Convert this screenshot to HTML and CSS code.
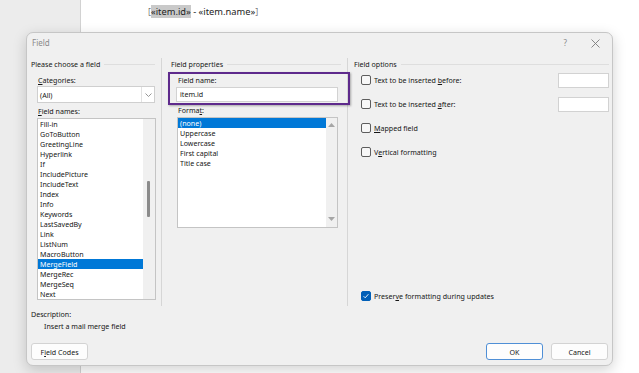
FILE: index.html
```html
<!DOCTYPE html>
<html lang="en">
<head>
    <meta charset="UTF-8">
    <title>Field</title>
    <link rel="stylesheet" href="styles.css">
</head>
<body>

<div class="word">
    <div class="gutter"></div>
    <div class="page">
        <p class="merge-line"><span class="bracket">[</span><span class="hl">«item.id»</span> - «item.name»<span class="bracket">]</span></p>
    </div>
</div>

<div class="dialog">
    <div class="titlebar">
        <span class="title">Field</span>
        <div class="title-btns">
            <span class="help">?</span>
            <svg class="close" width="9" height="9" viewBox="0 0 9 9"><path d="M0.5 0.5 L8.5 8.5 M8.5 0.5 L0.5 8.5" stroke="#7a7a7a" stroke-width="0.9" fill="none"/></svg>
        </div>
    </div>

    <div class="columns">
        <!-- Please choose a field -->
        <div class="col col-choose">
            <div class="group-head"><span>Please choose a field</span><i></i></div>
            <div class="label indent"><u>C</u>ategories:</div>
            <div class="combo">
                <span>(All)</span>
                <span class="combo-btn">
                    <svg width="7" height="4" viewBox="0 0 7 4"><path d="M0.5 0.5 L3.5 3.5 L6.5 0.5" stroke="#8a8a8a" stroke-width="0.9" fill="none"/></svg>
                </span>
            </div>
            <div class="label indent"><u>F</u>ield names:</div>
            <div class="listbox names">
                <ul id="fieldNames"></ul>
                <div class="vscroll"><div class="thumb"></div></div>
            </div>
        </div>

        <!-- Field properties -->
        <div class="col col-props">
            <div class="group-head"><span>Field properties</span><i></i></div>
            <div class="highlight">
                <div class="label">Field name:</div>
                <div class="textbox">item.id</div>
            </div>
            <div class="label format-label">Forma<u>t</u>:</div>
            <div class="listbox formats">
                <ul>
                    <li class="selected">(none)</li>
                    <li>Uppercase</li>
                    <li>Lowercase</li>
                    <li>First capital</li>
                    <li>Title case</li>
                </ul>
                <div class="vscroll arrows">
                    <svg width="7" height="4" viewBox="0 0 7 4"><path d="M0 4 L3.5 0 L7 4 Z" fill="#a6a6a6"/></svg>
                    <svg width="7" height="4" viewBox="0 0 7 4"><path d="M0 0 L3.5 4 L7 0 Z" fill="#a6a6a6"/></svg>
                </div>
            </div>
        </div>

        <!-- Field options -->
        <div class="col col-options">
            <div class="group-head"><span>Field options</span><i></i></div>
            <div class="options">
                <div class="opt-row">
                    <span class="check"></span>
                    <span class="opt-label">Text to be inserted <u>b</u>efore:</span>
                    <span class="small-box"></span>
                </div>
                <div class="opt-row">
                    <span class="check"></span>
                    <span class="opt-label">Text to be inserted <u>a</u>fter:</span>
                    <span class="small-box"></span>
                </div>
                <div class="opt-row">
                    <span class="check"></span>
                    <span class="opt-label"><u>M</u>apped field</span>
                </div>
                <div class="opt-row">
                    <span class="check"></span>
                    <span class="opt-label">V<u>e</u>rtical formatting</span>
                </div>
                <div class="opt-row preserve">
                    <span class="check checked">
                        <svg width="8" height="8" viewBox="0 0 8 8"><path d="M1.6 4.2 L3.2 5.8 L6.4 2.2" stroke="#fff" stroke-width="0.9" fill="none"/></svg>
                    </span>
                    <span class="opt-label">Preser<u>v</u>e formatting during updates</span>
                </div>
            </div>
        </div>
    </div>

    <div class="description">
        <div>Description:</div>
        <div class="desc-text">Insert a mail merge field</div>
    </div>

    <div class="footer-btns">
        <button class="btn">F<u>i</u>eld Codes</button>
        <span class="spacer"></span>
        <button class="btn btn-ok">OK</button>
        <button class="btn">Cancel</button>
    </div>
</div>

<script>
    const fieldNames = ['Fill-in', 'GoToButton', 'GreetingLine', 'Hyperlink', 'If', 'IncludePicture',
        'IncludeText', 'Index', 'Info', 'Keywords', 'LastSavedBy', 'Link', 'ListNum',
        'MacroButton', 'MergeField', 'MergeRec', 'MergeSeq', 'Next'];

    // fill the field names list
    const list = document.getElementById('fieldNames');
    fieldNames.forEach(name => {
        const li = document.createElement('li');
        li.textContent = name;
        if (name === 'MergeField') li.classList.add('selected');
        list.appendChild(li);
    });
</script>

</body>
</html>
```

FILE: styles.css
```css
body {
    margin: 0;
    width: 639px;
    height: 373px;
    overflow: hidden;
    font-family: "Noto Sans", "Open Sans", sans-serif;
    font-size: 7.1px;
    color: #161616;
    position: relative;
}

u {
    text-decoration-thickness: 0.6px;
    text-underline-offset: 1px;
}

/* document behind the dialog */
.word {
    display: flex;
    height: 373px;
}

.gutter {
    width: 80px;
    background-color: #ececec;
    border-right: 1px solid #d2d2d2;
}

.page {
    flex: 1;
    background-color: #fff;
    padding-left: 67px;
}

.merge-line {
    margin: 5px 0 0;
    font-size: 9.3px;
    line-height: 14px;
    color: #222;
}

.merge-line .hl {
    background-color: #c9c9c9;
}

.merge-line .bracket {
    color: #444;
    font-weight: 300;
}

/* dialog window */
.dialog {
    position: absolute;
    left: 26px;
    top: 32px;
    width: 587px;
    height: 334px;
    box-sizing: border-box;
    background-color: #f0f0f0;
    border: 1px solid #c6c6c6;
    border-radius: 7px;
    box-shadow: 0 4px 14px rgba(0, 0, 0, 0.18);
    display: flex;
    flex-direction: column;
}

.titlebar {
    height: 25px;
    box-sizing: border-box;
    padding: 4px 12px 0 5px;
    display: flex;
    justify-content: space-between;
    line-height: 12px;
}

.title {
    color: #8a8a8a;
    font-size: 8px;
}

.title-btns {
    display: flex;
    align-items: center;
    gap: 24px;
    height: 12px;
}

.help {
    color: #8a8a8a;
    font-size: 8px;
}

.columns {
    display: flex;
    height: 248px;
}

.col {
    box-sizing: border-box;
    display: flex;
    flex-direction: column;
}

.col-choose {
    width: 135px;
    padding-left: 4px;
    border-right: 1px solid #d6d6d6;
}

.col-props {
    width: 186px;
    padding-left: 9px;
    border-right: 1px solid #d6d6d6;
}

.col-options {
    flex: 1;
    padding-left: 6px;
    padding-right: 3px;
}

.group-head {
    display: flex;
    align-items: center;
    line-height: 12px;
    height: 12px;
}

.group-head i {
    flex: 1;
    height: 1px;
    background-color: #dedede;
    margin: 0 6px 0 4px;
}

.col-options .group-head i {
    margin-right: 0;
}

.label {
    line-height: 12px;
}

.indent {
    margin-left: 7px;
}

.col-choose .label:nth-of-type(2) {
    margin-top: 4px;
}

.combo {
    margin: 0 0 2px 6px;
    width: 118px;
    height: 17px;
    box-sizing: border-box;
    background-color: #fff;
    border: 1px solid #cfcfcf;
    display: flex;
    align-items: center;
    padding-left: 2px;
}

.combo span:first-child {
    flex: 1;
}

.combo-btn {
    width: 12px;
    height: 15px;
    border-left: 1px solid #e2e2e2;
    display: flex;
    align-items: center;
    justify-content: center;
}

.listbox {
    background-color: #fff;
    border: 1px solid #c4c4c4;
    box-sizing: border-box;
    display: flex;
    overflow: hidden;
}

.listbox ul {
    list-style: none;
    margin: 0;
    padding: 0;
    flex: 1;
}

.listbox li {
    line-height: 10px;
    height: 10px;
    padding-left: 2px;
    white-space: nowrap;
}

.listbox li.selected {
    background-color: #0078d7;
    color: #fff;
}

.names {
    margin: 1px 0 0 6px;
    width: 119px;
    height: 182px;
}

.vscroll {
    width: 12px;
    background-color: #f0f0f0;
    position: relative;
}

.thumb {
    position: absolute;
    left: 4px;
    top: 62px;
    width: 3px;
    height: 36px;
    background-color: #8b8b8b;
    border-radius: 1px;
}

.vscroll.arrows {
    display: flex;
    flex-direction: column;
    justify-content: space-between;
    align-items: center;
    padding: 5px 0 6px;
    box-sizing: border-box;
    width: 11px;
}

/* purple annotation box around the field name */
.highlight {
    margin: 2px 0 0 -3px;
    width: 182px;
    height: 33px;
    box-sizing: border-box;
    border: 2px solid #5e2a8c;
    box-shadow: 1px 1px 2px rgba(0, 0, 0, 0.3);
    padding-left: 8px;
    position: relative;
    z-index: 1;
}

.textbox {
    margin: 1px 0 0 -2px;
    width: 162px;
    height: 15px;
    box-sizing: border-box;
    background-color: #fff;
    border: 1px solid #d2d2d2;
    line-height: 13px;
    padding-left: 3px;
}

.format-label {
    margin: -1px 0 0 7px;
}

.formats {
    margin: 1px 0 0 6px;
    width: 161px;
    height: 111px;
}

.options {
    flex: 1;
    display: flex;
    flex-direction: column;
    gap: 8px;
    padding-top: 2px;
    padding-bottom: 2px;
}

.opt-row {
    display: flex;
    align-items: center;
    height: 16px;
    padding-left: 7px;
}

.opt-label {
    flex: 1;
    margin-left: 3px;
}

.check {
    width: 10px;
    height: 10px;
    box-sizing: border-box;
    border: 1px solid #5d5d5d;
    border-radius: 2px;
    background-color: #f7f7f7;
    display: flex;
    align-items: center;
    justify-content: center;
}

.check.checked {
    background-color: #005fb8;
    border-color: #005fb8;
}

.small-box {
    width: 51px;
    height: 15px;
    box-sizing: border-box;
    background-color: #fff;
    border: 1px solid #d2d2d2;
}

.preserve {
    margin-top: auto;
}

.description {
    padding: 2px 0 0 4px;
    line-height: 12px;
}

.desc-text {
    padding-left: 13px;
}

.footer-btns {
    display: flex;
    gap: 8px;
    padding: 11px 4px 0 4px;
}

.spacer {
    flex: 1;
}

.btn {
    width: 57px;
    height: 17px;
    font-family: inherit;
    font-size: 7.1px;
    color: #161616;
    background-color: #fdfdfd;
    border: 1px solid #d3d3d3;
    border-radius: 3px;
    padding: 0;
}

.btn-ok {
    border-color: #4f8fd6;
}
```
